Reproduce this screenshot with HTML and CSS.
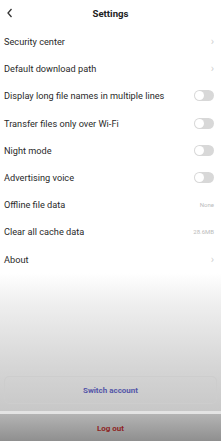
FILE: index.html
```html
<!DOCTYPE html>
<html>
<head>
<meta charset="utf-8">
<link rel="stylesheet" href="styles.css">
</head>
<body>
<div class="page">
  <header class="header">
    <svg class="back" width="8" height="10" viewBox="0 0 8 10"><path d="M5.5 1 L2 5 L5.5 9" fill="none" stroke="#333" stroke-width="1.3"/></svg>
    <div class="title">Settings</div>
  </header>
  <div class="list">
    <div class="row"><span>Security center</span><span class="chev">›</span></div>
    <div class="row"><span>Default download path</span><span class="chev">›</span></div>
    <div class="row"><span>Display long file names in multiple lines</span><span class="toggle"></span></div>
    <div class="row"><span>Transfer files only over Wi-Fi</span><span class="toggle"></span></div>
    <div class="row"><span>Night mode</span><span class="toggle"></span></div>
    <div class="row"><span>Advertising voice</span><span class="toggle"></span></div>
    <div class="row"><span>Offline file data</span><span class="val">None</span></div>
    <div class="row"><span>Clear all cache data</span><span class="val">28.6MB</span></div>
    <div class="row"><span>About</span><span class="chev">›</span></div>
  </div>
  <div class="bottom">
    <div class="switch">Switch account</div>
    <div class="line"></div>
    <div class="logout">Log out</div>
  </div>
</div>
</body>
</html>
```
FILE: styles.css
```css
html, body { margin: 0; padding: 0; }
body { font-family: Roboto, "Liberation Sans", sans-serif; color: #222; background: #fff; }
.page { width: 221px; height: 441px; display: flex; flex-direction: column; overflow: hidden; }
.header { height: 28px; padding-bottom: 2px; box-sizing: border-box; display: flex; align-items: center; justify-content: center; position: relative; }
.back { position: absolute; left: 6px; top: 8px; }
.title { font-size: 9.6px; font-weight: bold; color: #222; }
.list { display: flex; flex-direction: column; }
.row { height: 27.2px; display: flex; align-items: center; justify-content: space-between; padding: 0 7px 0 4px; font-size: 9.2px; color: #2a2a2a; }
.chev { color: #d0d0d0; font-size: 11px; }
.val { color: #bbb; font-size: 6px; }
.toggle { width: 20px; height: 11px; border-radius: 6px; background: #d8d8d8; position: relative; }
.toggle::before { content: ""; position: absolute; left: 1px; top: 1px; width: 9px; height: 9px; border-radius: 50%; background: #fff; }
.bottom { flex: 1; display: flex; flex-direction: column; justify-content: flex-end; background: linear-gradient(#ffffff 0%, #efefef 18%, #d6d6d6 55%, #c6c6c6 85%, #bebebe 100%); }
.switch { margin: 0 4px; height: 26px; border: 1px solid #cdcdcd; border-radius: 5px; display: flex; align-items: center; justify-content: center; font-size: 8px; font-weight: bold; color: #5456a8; }
.line { margin-top: 7px; height: 3px; background: #e4e4e4; }
.logout { height: 27px; display: flex; align-items: center; justify-content: center; padding-top: 1px; box-sizing: border-box; font-size: 8px; font-weight: bold; color: #8e2424; background: linear-gradient(#b4b4b4, #8f8f8f); }
```
